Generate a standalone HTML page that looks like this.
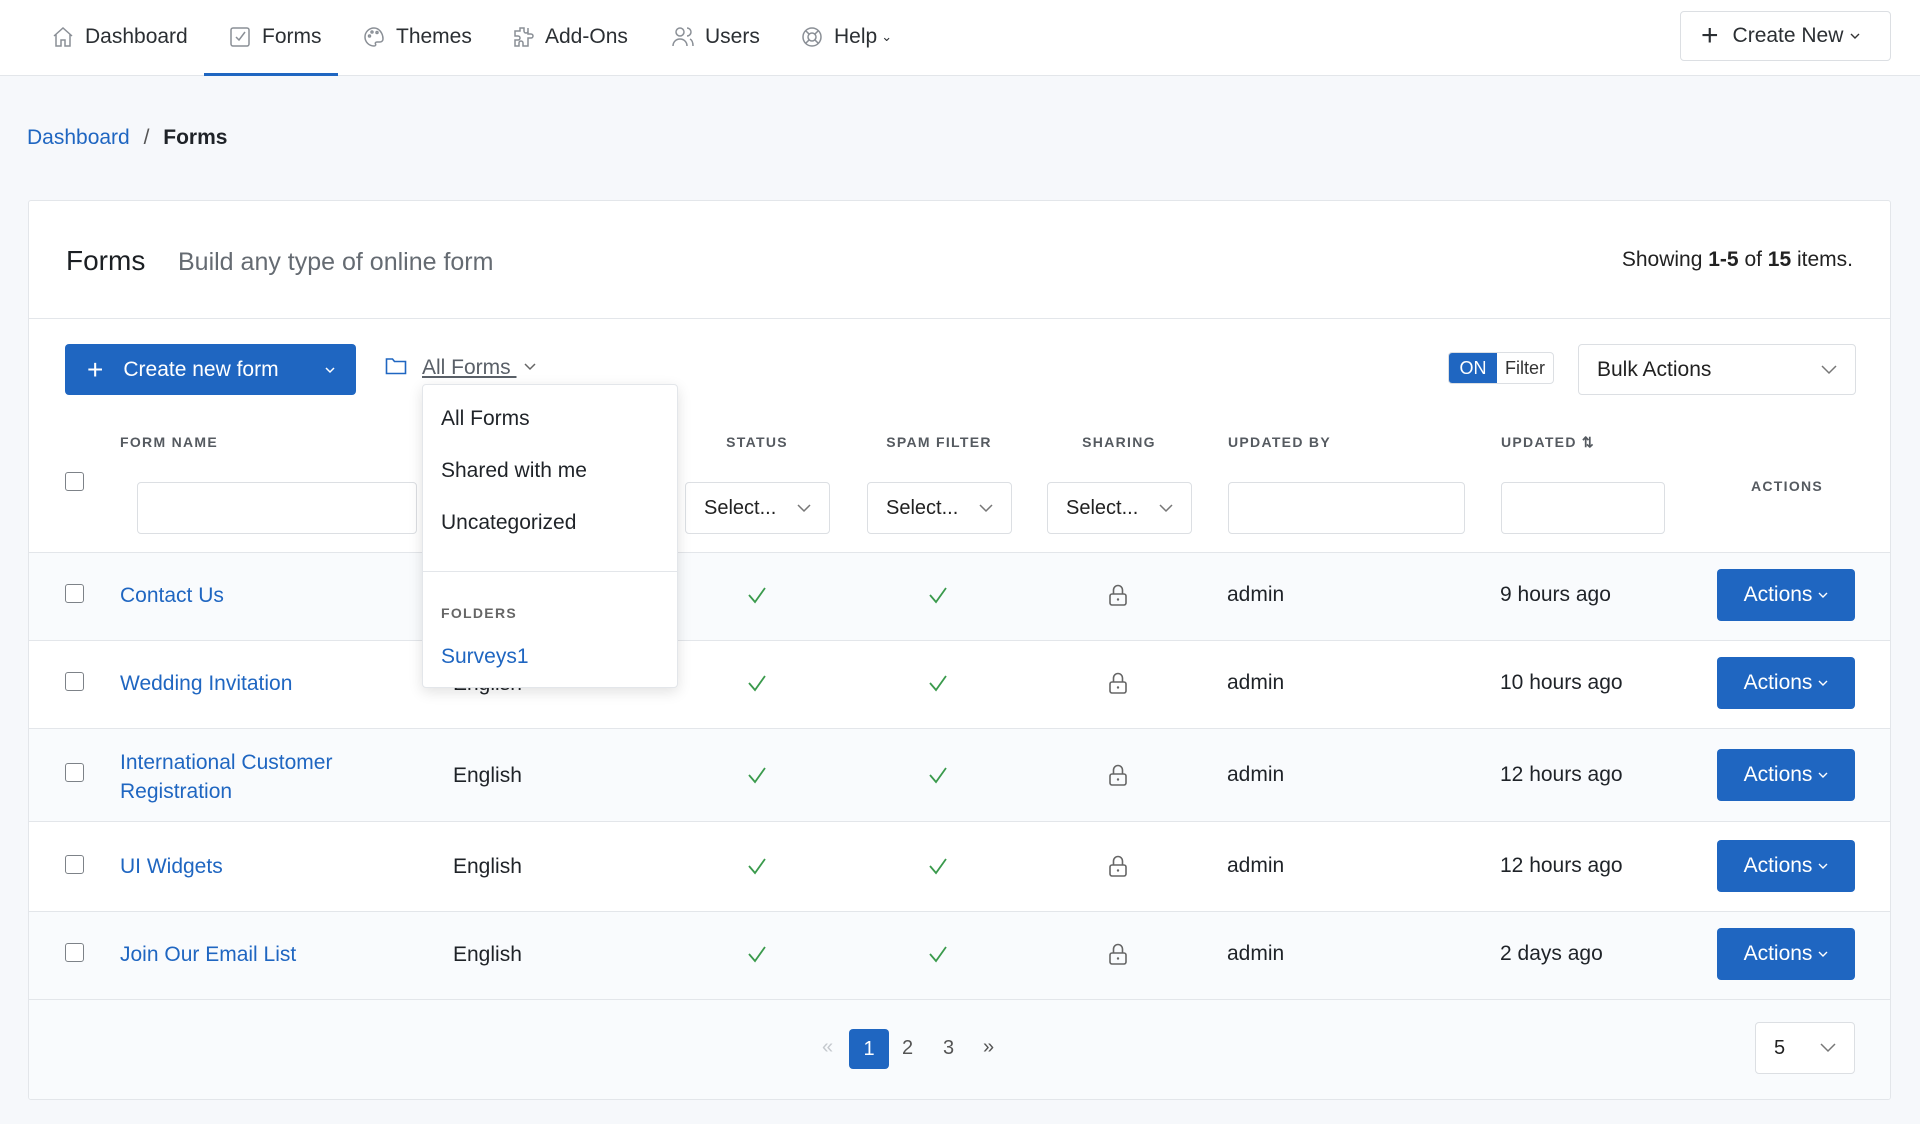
<!DOCTYPE html>
<html><head><meta charset="utf-8"><style>
*{box-sizing:border-box;margin:0;padding:0}
body{width:1920px;height:1124px;background:#f6f8fb;font-family:"Liberation Sans",sans-serif;color:#1f2328;position:relative;overflow:hidden;font-size:21px}
.a{position:absolute}
.nav{left:0;top:0;width:1920px;height:76px;background:#fff;border-bottom:1px solid #e3e6ea}
.ni{top:25px;font-size:21px;color:#2b2f33;display:flex;align-items:center;gap:10px}
.ni svg{width:24px;height:24px;stroke:#8a8f96;fill:none;stroke-width:1.5}
.card{left:28px;top:200px;width:1863px;height:900px;background:#fff;border:1px solid #e3e6ea;border-radius:3px;overflow:hidden}
.btn{background:#1f66c1;color:#fff;border-radius:4px}
.box{background:#fff;border:1px solid #dcdfe3;border-radius:4px}
.th{font-size:14px;letter-spacing:1.3px;color:#555a60;font-weight:bold}
.cb{width:19px;height:19px;border:1.5px solid #7d8288;border-radius:3px;background:#fff}
.row{left:0;width:1863px;border-top:1px solid #e3e6ea}
.lnk{color:#1f66c1}
.sel{font-size:20px;color:#222;display:flex;align-items:center;justify-content:space-between;padding:0 18px}
.ck{position:absolute;width:22px;height:22px}
.lk{position:absolute;width:22px;height:24px}
.ad{position:absolute;font-size:21px}
.ac{position:absolute;width:138px;height:52px;background:#1f66c1;color:#fff;border-radius:4px;font-size:21px;display:flex;align-items:center;justify-content:center;gap:6px}
</style></head><body>
<div class="a nav"></div>
<div class="a ni" style="left:51px"><svg viewBox="0 0 24 24"><path d="M3 11L12 3l9 8M5 9.5V21h5v-6h4v6h5V9.5"/></svg>Dashboard</div>
<div class="a ni" style="left:228px"><svg viewBox="0 0 24 24"><rect x="3" y="3" width="18" height="18" rx="2"/><path d="M8 12l3 3 6-8"/></svg>Forms</div>
<div class="a" style="left:204px;top:73px;width:134px;height:3px;background:#1f66c1"></div>
<div class="a ni" style="left:362px"><svg viewBox="0 0 24 24"><path d="M12 3a9 9 0 100 18c1.5 0 2-1 1.5-2s0-2 1.5-2h3a3 3 0 003-3c0-6-4-11-9-11z"/><circle cx="7.5" cy="11" r="1"/><circle cx="10" cy="7" r="1"/><circle cx="15" cy="7.5" r="1"/></svg>Themes</div>
<div class="a ni" style="left:511px"><svg viewBox="0 0 24 24"><path d="M9 3h4v3a2 2 0 104 0V3h0v6h3a2 2 0 010 4h-3v8h-5v-3a2 2 0 10-4 0v3H4v-6h3a2 2 0 000-4H4V6h5z"/></svg>Add-Ons</div>
<div class="a ni" style="left:671px"><svg viewBox="0 0 24 24"><circle cx="9" cy="7" r="4"/><path d="M2 21c0-4 3-7 7-7s7 3 7 7M16 3a4 4 0 010 8M19 14c2 1 3 4 3 7"/></svg>Users</div>
<div class="a ni" style="left:800px"><svg viewBox="0 0 24 24"><circle cx="12" cy="12" r="9"/><circle cx="12" cy="12" r="4"/><path d="M5.6 5.6l3.6 3.6M18.4 5.6l-3.6 3.6M5.6 18.4l3.6-3.6M18.4 18.4l-3.6-3.6"/></svg>Help <span style="font-size:13px;margin-left:-6px">&#8964;</span></div>
<div class="a box" style="left:1680px;top:11px;width:211px;height:50px;display:flex;align-items:center;padding-left:20px;font-size:21px;color:#2b2f33"><span style="font-size:30px;font-weight:300;margin-right:14px;line-height:1">+</span>Create New <svg width="12" height="12" viewBox="0 0 12 12" style="margin-left:6px"><path d="M2 4l4 4 4-4" stroke="#333" fill="none" stroke-width="1.4"/></svg></div>
<div class="a" style="left:27px;top:126px;font-size:21px"><span class="lnk">Dashboard</span> <span style="color:#555;margin:0 8px">/</span> <span style="font-weight:600">Forms</span></div>

<div class="a card">
 <div class="a" style="left:37px;top:44px;font-size:28px;color:#1b1f23">Forms</div>
 <div class="a" style="left:149px;top:47px;font-size:25px;color:#656b72">Build any type of online form</div>
 <div class="a" style="right:37px;top:47px;font-size:21px;color:#222">Showing <b>1-5</b> of <b>15</b> items.</div>
 <div class="a" style="left:0;top:117px;width:1863px;border-top:1px solid #e3e6ea"></div>
 <div class="a btn" style="left:36px;top:143px;width:291px;height:51px;display:flex;align-items:center;padding-left:22px;font-size:21px"><span style="font-size:28px;line-height:1;margin-right:20px">+</span>Create new form<svg width="12" height="12" viewBox="0 0 12 12" style="margin-left:auto;margin-right:20px"><path d="M2 4l4 4 4-4" stroke="#fff" fill="none" stroke-width="1.5"/></svg></div>
 <svg class="a" style="left:356px;top:155px" width="22" height="20" viewBox="0 0 22 20"><path d="M1.5 3h6l2 2.5h11v12h-19z" stroke="#1f66c1" fill="none" stroke-width="1.6"/></svg>
 <div class="a" style="left:393px;top:155px;font-size:21px;color:#5a6068;text-decoration:underline">All Forms&nbsp;</div>
 <div class="a" style="left:1419px;top:151px;width:106px;height:32px;border:1px solid #dcdfe3;border-radius:4px;overflow:hidden;display:flex;font-size:18px"><div style="background:#1f66c1;color:#fff;width:48px;display:flex;align-items:center;justify-content:center">ON</div><div style="flex:1;display:flex;align-items:center;justify-content:center;color:#333">Filter</div></div>
 <div class="a box sel" style="left:1549px;top:143px;width:278px;height:51px;font-size:21px">Bulk Actions<svg width="16" height="10" viewBox="0 0 16 10"><path d="M1 1l7 7 7-7" stroke="#777" fill="none" stroke-width="1.5"/></svg></div>

 <div class="a th" style="left:91px;top:233px">FORM NAME</div>
 <div class="a th" style="left:728px;top:233px;width:0;display:flex;justify-content:center"><span style="white-space:nowrap">STATUS</span></div>
 <div class="a th" style="left:910px;top:233px;width:0;display:flex;justify-content:center"><span style="white-space:nowrap">SPAM FILTER</span></div>
 <div class="a th" style="left:1090px;top:233px;width:0;display:flex;justify-content:center"><span style="white-space:nowrap">SHARING</span></div>
 <div class="a th" style="left:1199px;top:233px">UPDATED BY</div>
 <div class="a th" style="left:1472px;top:233px">UPDATED <span style="font-size:14px">&#8645;</span></div>
 <div class="a th" style="left:1758px;top:277px;width:0;display:flex;justify-content:center"><span style="white-space:nowrap">ACTIONS</span></div>
 <div class="a cb" style="left:36px;top:271px"></div>
 <div class="a box" style="left:108px;top:281px;width:280px;height:52px"></div>
 <div class="a box sel" style="left:656px;top:281px;width:145px;height:52px">Select...<svg width="14" height="9" viewBox="0 0 14 9"><path d="M1 1l6 6 6-6" stroke="#777" fill="none" stroke-width="1.5"/></svg></div>
 <div class="a box sel" style="left:838px;top:281px;width:145px;height:52px">Select...<svg width="14" height="9" viewBox="0 0 14 9"><path d="M1 1l6 6 6-6" stroke="#777" fill="none" stroke-width="1.5"/></svg></div>
 <div class="a box sel" style="left:1018px;top:281px;width:145px;height:52px">Select...<svg width="14" height="9" viewBox="0 0 14 9"><path d="M1 1l6 6 6-6" stroke="#777" fill="none" stroke-width="1.5"/></svg></div>
 <div class="a box" style="left:1199px;top:281px;width:237px;height:52px"></div>
 <div class="a box" style="left:1472px;top:281px;width:164px;height:52px"></div>

 <div class="a row" style="top:351px;height:88px;background:#f9fbfd"></div>
 <div class="a row" style="top:439px;height:88px;background:#fff"></div>
 <div class="a row" style="top:527px;height:93px;background:#f9fbfd"></div>
 <div class="a row" style="top:620px;height:90px;background:#fff"></div>
 <div class="a row" style="top:710px;height:88px;background:#f9fbfd"></div>
 <div class="a row" style="top:798px;height:102px;background:#f9fbfd"></div>

 <div class="a cb" style="left:36px;top:383px"></div><div class="a lnk" style="left:91px;top:383px">Contact Us</div>
 <div class="a cb" style="left:36px;top:471px"></div><div class="a lnk" style="left:91px;top:471px">Wedding Invitation</div><div class="a" style="left:424px;top:471px">English</div>
 <div class="a cb" style="left:36px;top:562px"></div><div class="a lnk" style="left:91px;top:547px;line-height:29px">International Customer<br>Registration</div><div class="a" style="left:424px;top:563px">English</div>
 <div class="a cb" style="left:36px;top:654px"></div><div class="a lnk" style="left:91px;top:654px">UI Widgets</div><div class="a" style="left:424px;top:654px">English</div>
 <div class="a cb" style="left:36px;top:742px"></div><div class="a lnk" style="left:91px;top:742px">Join Our Email List</div><div class="a" style="left:424px;top:742px">English</div>
</div>

<svg class="ck" style="left:746px;top:584px" viewBox="0 0 22 22"><path d="M3 11l6 7L19 4" stroke="#3a9a4c" fill="none" stroke-width="1.8"/></svg>
<svg class="ck" style="left:927px;top:584px" viewBox="0 0 22 22"><path d="M3 11l6 7L19 4" stroke="#3a9a4c" fill="none" stroke-width="1.8"/></svg>
<svg class="lk" style="left:1107px;top:583px" viewBox="0 0 22 24"><rect x="3" y="11" width="16" height="11" rx="2" stroke="#666" fill="none" stroke-width="1.6"/><path d="M6.5 11V7a4.5 4.5 0 019 0v4" stroke="#666" fill="none" stroke-width="1.6"/><circle cx="11" cy="16.5" r="1.2" fill="#666"/></svg>
<div class="ad" style="left:1227px;top:583px">admin</div><div class="ad" style="left:1500px;top:583px">9 hours ago</div>
<div class="ac" style="left:1717px;top:569px">Actions <svg width="10" height="8" viewBox="0 0 10 8"><path d="M1 2l4 4 4-4" stroke="#fff" fill="none" stroke-width="1.4"/></svg></div>

<svg class="ck" style="left:746px;top:672px" viewBox="0 0 22 22"><path d="M3 11l6 7L19 4" stroke="#3a9a4c" fill="none" stroke-width="1.8"/></svg>
<svg class="ck" style="left:927px;top:672px" viewBox="0 0 22 22"><path d="M3 11l6 7L19 4" stroke="#3a9a4c" fill="none" stroke-width="1.8"/></svg>
<svg class="lk" style="left:1107px;top:671px" viewBox="0 0 22 24"><rect x="3" y="11" width="16" height="11" rx="2" stroke="#666" fill="none" stroke-width="1.6"/><path d="M6.5 11V7a4.5 4.5 0 019 0v4" stroke="#666" fill="none" stroke-width="1.6"/><circle cx="11" cy="16.5" r="1.2" fill="#666"/></svg>
<div class="ad" style="left:1227px;top:671px">admin</div><div class="ad" style="left:1500px;top:671px">10 hours ago</div>
<div class="ac" style="left:1717px;top:657px">Actions <svg width="10" height="8" viewBox="0 0 10 8"><path d="M1 2l4 4 4-4" stroke="#fff" fill="none" stroke-width="1.4"/></svg></div>

<svg class="ck" style="left:746px;top:764px" viewBox="0 0 22 22"><path d="M3 11l6 7L19 4" stroke="#3a9a4c" fill="none" stroke-width="1.8"/></svg>
<svg class="ck" style="left:927px;top:764px" viewBox="0 0 22 22"><path d="M3 11l6 7L19 4" stroke="#3a9a4c" fill="none" stroke-width="1.8"/></svg>
<svg class="lk" style="left:1107px;top:763px" viewBox="0 0 22 24"><rect x="3" y="11" width="16" height="11" rx="2" stroke="#666" fill="none" stroke-width="1.6"/><path d="M6.5 11V7a4.5 4.5 0 019 0v4" stroke="#666" fill="none" stroke-width="1.6"/><circle cx="11" cy="16.5" r="1.2" fill="#666"/></svg>
<div class="ad" style="left:1227px;top:763px">admin</div><div class="ad" style="left:1500px;top:763px">12 hours ago</div>
<div class="ac" style="left:1717px;top:749px">Actions <svg width="10" height="8" viewBox="0 0 10 8"><path d="M1 2l4 4 4-4" stroke="#fff" fill="none" stroke-width="1.4"/></svg></div>

<svg class="ck" style="left:746px;top:855px" viewBox="0 0 22 22"><path d="M3 11l6 7L19 4" stroke="#3a9a4c" fill="none" stroke-width="1.8"/></svg>
<svg class="ck" style="left:927px;top:855px" viewBox="0 0 22 22"><path d="M3 11l6 7L19 4" stroke="#3a9a4c" fill="none" stroke-width="1.8"/></svg>
<svg class="lk" style="left:1107px;top:854px" viewBox="0 0 22 24"><rect x="3" y="11" width="16" height="11" rx="2" stroke="#666" fill="none" stroke-width="1.6"/><path d="M6.5 11V7a4.5 4.5 0 019 0v4" stroke="#666" fill="none" stroke-width="1.6"/><circle cx="11" cy="16.5" r="1.2" fill="#666"/></svg>
<div class="ad" style="left:1227px;top:854px">admin</div><div class="ad" style="left:1500px;top:854px">12 hours ago</div>
<div class="ac" style="left:1717px;top:840px">Actions <svg width="10" height="8" viewBox="0 0 10 8"><path d="M1 2l4 4 4-4" stroke="#fff" fill="none" stroke-width="1.4"/></svg></div>

<svg class="ck" style="left:746px;top:943px" viewBox="0 0 22 22"><path d="M3 11l6 7L19 4" stroke="#3a9a4c" fill="none" stroke-width="1.8"/></svg>
<svg class="ck" style="left:927px;top:943px" viewBox="0 0 22 22"><path d="M3 11l6 7L19 4" stroke="#3a9a4c" fill="none" stroke-width="1.8"/></svg>
<svg class="lk" style="left:1107px;top:942px" viewBox="0 0 22 24"><rect x="3" y="11" width="16" height="11" rx="2" stroke="#666" fill="none" stroke-width="1.6"/><path d="M6.5 11V7a4.5 4.5 0 019 0v4" stroke="#666" fill="none" stroke-width="1.6"/><circle cx="11" cy="16.5" r="1.2" fill="#666"/></svg>
<div class="ad" style="left:1227px;top:942px">admin</div><div class="ad" style="left:1500px;top:942px">2 days ago</div>
<div class="ac" style="left:1717px;top:928px">Actions <svg width="10" height="8" viewBox="0 0 10 8"><path d="M1 2l4 4 4-4" stroke="#fff" fill="none" stroke-width="1.4"/></svg></div>

<div class="a" style="left:822px;top:1036px;font-size:20px;color:#c5c9ce">&laquo;</div>
<div class="a btn" style="left:849px;top:1029px;width:40px;height:40px;display:flex;align-items:center;justify-content:center;font-size:20px">1</div>
<div class="a" style="left:902px;top:1037px;font-size:20px;color:#555">2</div>
<div class="a" style="left:943px;top:1037px;font-size:20px;color:#555">3</div>
<div class="a" style="left:983px;top:1036px;font-size:20px;color:#555">&raquo;</div>
<div class="a box sel" style="left:1755px;top:1022px;width:100px;height:52px">5<svg width="16" height="10" viewBox="0 0 16 10"><path d="M1 1l7 7 7-7" stroke="#777" fill="none" stroke-width="1.5"/></svg></div>

<div class="a" style="left:422px;top:384px;width:256px;height:304px;background:#fff;border:1px solid #e3e6ea;border-radius:4px;box-shadow:0 4px 14px rgba(0,0,0,.12)">
 <div class="a" style="left:18px;top:22px;font-size:21px">All Forms</div>
 <div class="a" style="left:18px;top:74px;font-size:21px">Shared with me</div>
 <div class="a" style="left:18px;top:126px;font-size:21px">Uncategorized</div>
 <div class="a" style="left:0;top:186px;width:254px;border-top:1px solid #e3e6ea"></div>
 <div class="a th" style="left:18px;top:220px;color:#666">FOLDERS</div>
 <div class="a lnk" style="left:18px;top:260px;font-size:21px">Surveys1</div>
</div>
<svg class="a" style="left:524px;top:362px" width="12" height="10" viewBox="0 0 12 10"><path d="M1 2l5 5 5-5" stroke="#666" fill="none" stroke-width="1.5"/></svg>
</body></html>
